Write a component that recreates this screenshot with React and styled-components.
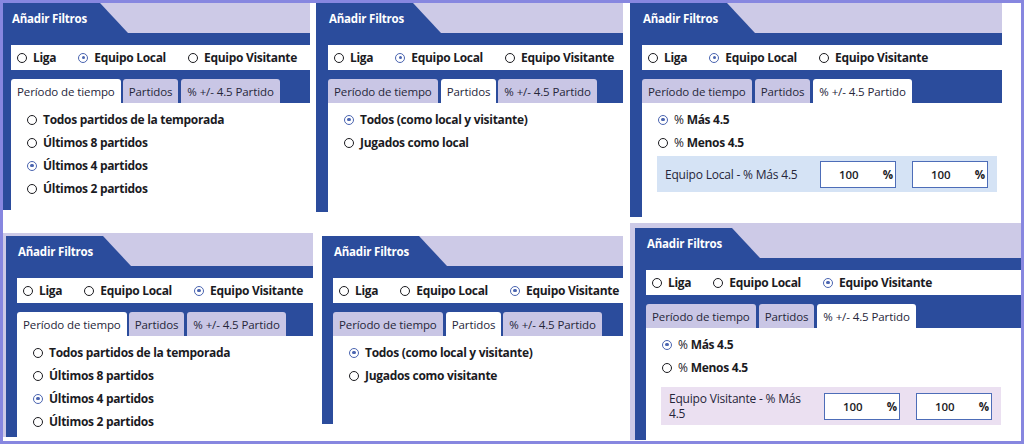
import styled, { createGlobalStyle } from "styled-components";

const GlobalStyle = createGlobalStyle`
  * { box-sizing: border-box; }
  body {
    margin: 0;
    background: #ffffff;
    font-family: "Open Sans", "Liberation Sans", sans-serif;
  }
`;

const BLUE = "#2b4c9c";
const LAVENDER = "#cdcae7";

const TEAMS = ["Liga", "Equipo Local", "Equipo Visitante"];
const TABS = ["Período de tiempo", "Partidos", "% +/- 4.5 Partido"];

//each panel of the collage
const panels = [
  { ml: 0, mt: 0, w: 307, h: 207, strip: 8, team: 1, tab: 0 },
  { ml: 6, mt: 0, w: 307, h: 209, strip: 12, team: 1, tab: 1 },
  { ml: 7, mt: 0, w: 372, h: 214, strip: 12, team: 1, tab: 2 },
  { ml: 0, mt: 10, w: 310, h: 204, strip: 11, team: 2, tab: 0, frame: 3 },
  { ml: 9, mt: 13, w: 301, h: 188, strip: 11, team: 2, tab: 1 },
  { ml: 7, mt: 0, w: 392, h: 217, strip: 11, team: 2, tab: 2, frame: 5 },
];

function Radio({ checked }) {
  return <StyledRadio $checked={checked} />;
}

function Content({ team, tab }) {
  if (tab === 0) {
    const items = [
      "Todos partidos de la temporada",
      "Últimos 8 partidos",
      "Últimos 4 partidos",
      "Últimos 2 partidos",
    ];
    return (
      <OptionList>
        {items.map((t, i) => (
          <Option key={t}>
            <Radio checked={i === 2} />
            {t}
          </Option>
        ))}
      </OptionList>
    );
  }
  if (tab === 1) {
    const items = [
      "Todos (como local y visitante)",
      team === 1 ? "Jugados como local" : "Jugados como visitante",
    ];
    return (
      <OptionList>
        {items.map((t, i) => (
          <Option key={t}>
            <Radio checked={i === 0} />
            {t}
          </Option>
        ))}
      </OptionList>
    );
  }
  const local = team === 1;
  return (
    <OptionList>
      <Option>
        <Radio checked />
        <Light>%</Light> Más 4.5
      </Option>
      <Option>
        <Radio />
        <Light>%</Light> Menos 4.5
      </Option>
      <RangeBox $tone={local ? "blue" : "purple"}>
        <RangeLabel>
          {local ? "Equipo Local - % Más 4.5" : "Equipo Visitante - % Más 4.5"}
        </RangeLabel>
        <PercentInput>
          <span>100</span>
          <Unit>%</Unit>
        </PercentInput>
        <PercentInput>
          <span>100</span>
          <Unit>%</Unit>
        </PercentInput>
      </RangeBox>
    </OptionList>
  );
}

function FilterPanel({ p }) {
  return (
    <Panel $ml={p.ml} $mt={p.mt} $w={p.w} $h={p.h} $frame={p.frame || 0}>
      <Header>
        <HeaderTab $strip={p.strip}>Añadir Filtros</HeaderTab>
      </Header>
      <Body $strip={p.strip}>
        <TeamRow>
          {TEAMS.map((t, i) => (
            <TeamOption key={t}>
              <Radio checked={p.team === i} />
              {t}
            </TeamOption>
          ))}
        </TeamRow>
        <TabBar>
          {TABS.map((t, i) => (
            <Tab key={t} $active={p.tab === i}>
              {t}
            </Tab>
          ))}
        </TabBar>
        <ContentArea>
          <Content team={p.team} tab={p.tab} />
        </ContentArea>
      </Body>
    </Panel>
  );
}

export default function App() {
  return (
    <>
      <GlobalStyle />
      <Canvas>
        <PanelRow $h={220}>
          {panels.slice(0, 3).map((p, i) => (
            <FilterPanel key={i} p={p} />
          ))}
        </PanelRow>
        <PanelRow $h={217}>
          {panels.slice(3).map((p, i) => (
            <FilterPanel key={i} p={p} />
          ))}
        </PanelRow>
      </Canvas>
    </>
  );
}

const Canvas = styled.div`
  width: 1024px;
  height: 444px;
  border: 3px solid #8787e0;
  background: #ffffff;
  display: flex;
  flex-direction: column;
  overflow: hidden;
`;

const PanelRow = styled.div`
  height: ${(p) => p.$h}px;
  display: flex;
  align-items: flex-start;
  flex-shrink: 0;
`;

const Panel = styled.div`
  margin-left: ${(p) => p.$ml}px;
  margin-top: ${(p) => p.$mt}px;
  width: ${(p) => p.$w}px;
  height: ${(p) => p.$h}px;
  flex-shrink: 0;
  background: ${BLUE};
  border-top: ${(p) => p.$frame}px solid ${LAVENDER};
  border-left: ${(p) => p.$frame}px solid ${LAVENDER};
  display: flex;
  flex-direction: column;
  overflow: hidden;
`;

const Header = styled.div`
  height: 30px;
  flex-shrink: 0;
  background: ${LAVENDER};
  display: flex;
`;

const HeaderTab = styled.div`
  width: 125px;
  background: ${BLUE};
  clip-path: polygon(0 0, 97px 0, 100% 100%, 0 100%);
  color: #ffffff;
  font-size: 11.5px;
  font-weight: 700;
  letter-spacing: -0.2px;
  display: flex;
  align-items: center;
  padding-left: ${(p) => p.$strip + 1}px;
`;

const Body = styled.div`
  flex: 1;
  display: flex;
  flex-direction: column;
  padding-left: ${(p) => p.$strip}px;
  padding-top: 12px;
  min-height: 0;
`;

const TeamRow = styled.div`
  height: 25px;
  flex-shrink: 0;
  background: #ffffff;
  display: flex;
  align-items: center;
  gap: 22px;
  padding-left: 6px;
  font-size: 12px;
  font-weight: 700;
  letter-spacing: -0.3px;
  color: #1b1b1f;
  white-space: nowrap;
`;

const TeamOption = styled.div`
  display: flex;
  align-items: center;
  gap: 6px;
`;

const StyledRadio = styled.span`
  width: 10px;
  height: 10px;
  border-radius: 50%;
  flex-shrink: 0;
  border: 1.8px solid ${(p) => (p.$checked ? "#4a64b0" : "#1b1b1f")};
  display: inline-flex;
  align-items: center;
  justify-content: center;
  &::after {
    content: "";
    width: 3.5px;
    height: 3.5px;
    border-radius: 50%;
    background: ${(p) => (p.$checked ? "#4a64b0" : "transparent")};
  }
`;

const TabBar = styled.div`
  height: 24px;
  flex-shrink: 0;
  margin-top: 9px;
  display: flex;
  align-items: flex-end;
  gap: 2px;
`;

const Tab = styled.div`
  height: 24px;
  padding: 0 6px;
  border-radius: 3px 3px 0 0;
  background: ${(p) => (p.$active ? "#ffffff" : "#c9c6e5")};
  color: #26263a;
  font-size: 11.5px;
  font-weight: 500;
  letter-spacing: -0.1px;
  display: flex;
  align-items: center;
  white-space: nowrap;
  margin-right: ${(p) => (p.$active ? 0 : 1)}px;
`;

const ContentArea = styled.div`
  flex: 1;
  background: #ffffff;
  padding: 5px 3px 0 16px;
`;

const OptionList = styled.div`
  display: flex;
  flex-direction: column;
`;

const Option = styled.div`
  height: 23px;
  display: flex;
  align-items: center;
  gap: 6px;
  font-size: 12px;
  font-weight: 700;
  letter-spacing: -0.3px;
  color: #1b1b1f;
  white-space: nowrap;
`;

const Light = styled.span`
  font-weight: 500;
  margin-right: -3px;
`;

const RangeBox = styled.div`
  margin-top: ${(p) => (p.$tone === "blue" ? 2 : 8)}px;
  margin-left: -1px;
  max-width: 340px;
  min-height: 36px;
  padding: 4px 9px 4px 8px;
  display: flex;
  align-items: center;
  gap: 16px;
  background: ${(p) => (p.$tone === "blue" ? "#d5e3f5" : "#ebe0f1")};
`;

const RangeLabel = styled.div`
  flex: 1;
  font-size: 12px;
  font-weight: 500;
  letter-spacing: -0.2px;
  color: #26263a;
  line-height: 15px;
`;

const PercentInput = styled.div`
  width: 76px;
  height: 27px;
  flex-shrink: 0;
  background: #ffffff;
  border: 1px solid #4d6db8;
  display: flex;
  align-items: center;
  justify-content: flex-end;
  gap: 24px;
  padding-right: 2px;
  font-size: 11.5px;
  font-weight: 600;
  color: #1b1b1f;
`;

const Unit = styled.span`
  font-weight: 700;
`;
